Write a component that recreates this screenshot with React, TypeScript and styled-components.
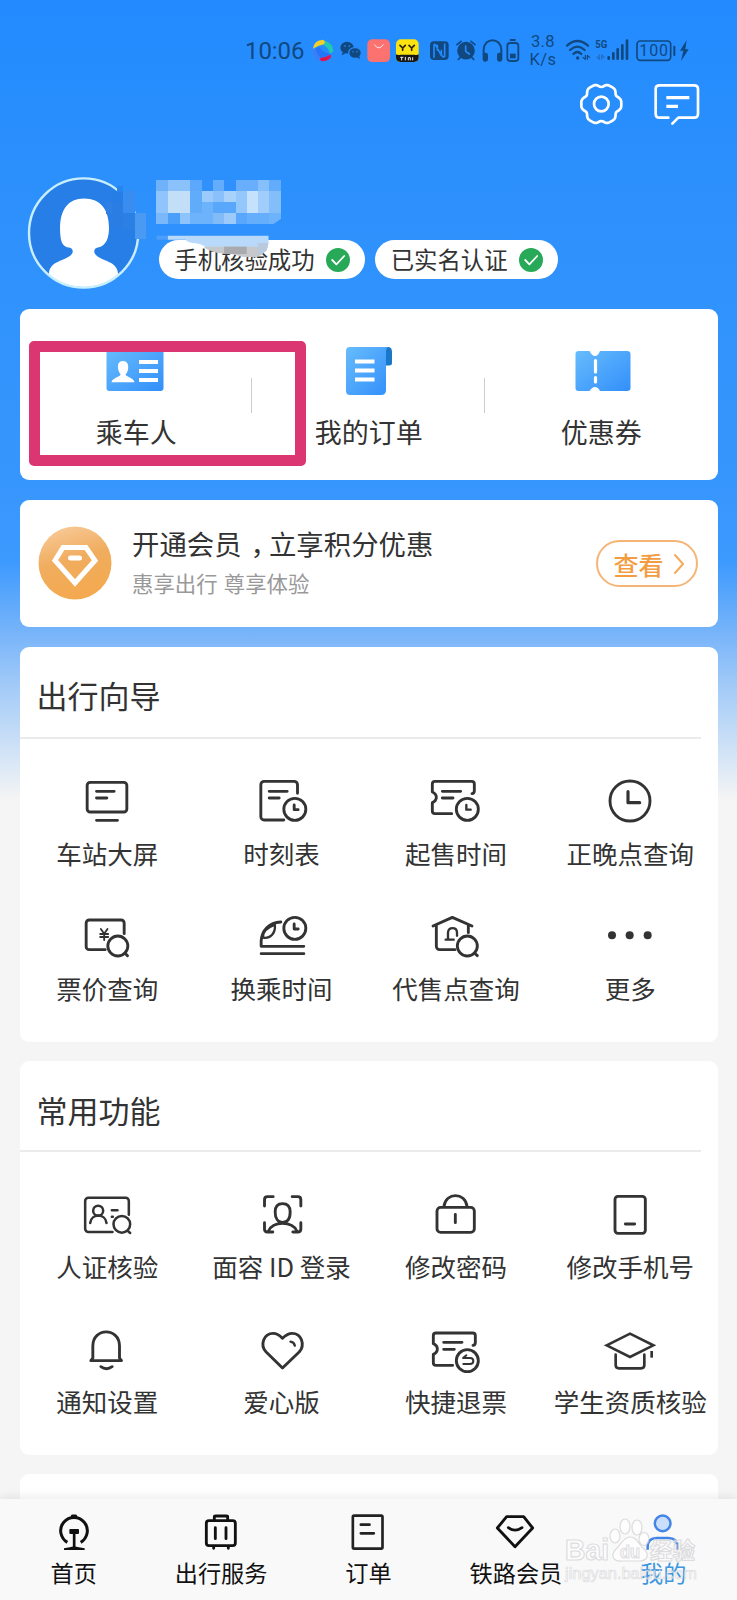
import React from "react";
import styled, { createGlobalStyle } from "styled-components";

const GlobalStyle = createGlobalStyle`
  * { box-sizing: border-box; }
  body {
    margin: 0;
    background: #f5f5f5;
    font-family: "Noto Sans CJK SC", "Noto Sans", sans-serif;
    color: #333;
  }
`;

const Screen = styled.div`
  position: relative;
  display: flex;
  flex-direction: column;
  width: 737px;
  height: 1600px;
  overflow: hidden;
  background: linear-gradient(
    180deg,
    #228bff 0px,
    #2c90fc 180px,
    #3796fd 480px,
    #3c99fe 560px,
    #7db7f9 640px,
    #a5ccf8 690px,
    #d3e4f6 755px,
    #f5f5f5 800px
  );
`;

const Content = styled.main`
  flex: 1;
  min-height: 0;
  overflow: hidden;
`;

/* ---------- shared drawing surface ---------- */

const Drawing = styled.svg`
  display: block;
  flex: none;
  fill: none;
  stroke-linecap: round;
  stroke-linejoin: round;
`;

type GlyphProps = {
  box: [number, number, number, number];
  color?: string;
  weight?: number;
  children: React.ReactNode;
};

/* Icons are drawn on a grid three times finer than the page. */
function Glyph({ box, color = "#333", weight = 8.6, children }: GlyphProps) {
  return (
    <Drawing
      viewBox={box.join(" ")}
      width={box[2] / 3}
      height={box[3] / 3}
      stroke={color}
      strokeWidth={weight}
    >
      {children}
    </Drawing>
  );
}

/* ---------- status bar ---------- */

const INK = "#11487f";

const StatusBar = styled.div`
  display: flex;
  align-items: center;
  height: 70px;
  padding: 32px 0 0 245px;
  color: ${INK};
`;

const Clock = styled.span`
  width: 63px;
  font: 400 24px/38px Roboto, sans-serif;
  letter-spacing: -0.1px;
`;

const NetSpeed = styled.span`
  width: 34px;
  text-align: center;
  font: 400 16.5px/18px Roboto, sans-serif;
  letter-spacing: 0.4px;
`;

function StatusIcons() {
  return (
    <>
      <Glyph box={[234, 36, 87, 114]} color="none">
        <path d="M249 86 Q252 60 279 59 Q289 64 283 73 Q266 75 249 86Z" fill="#f3cf2c" />
        <path d="M286 62 Q308 70 310 92 Q307 100 299 100 Q296 84 282 76Z" fill="#22c9b0" />
        <path d="M249 88 Q247 112 266 122 Q274 122 273 112 Q260 102 258 84Z" fill="#3d7df5" />
        <path d="M258 84 Q258 104 272 113 Q290 114 299 101 Q280 98 268 82Z" fill="#2375fa" />
        <path d="M271 114 Q286 114 300 104 Q306 106 301 114 Q291 124 276 124 Q268 121 271 114Z" fill="#e4134e" />
      </Glyph>
      <Glyph box={[321, 36, 81, 114]} color="none">
        <g fill={INK}>
          <ellipse cx="351" cy="83" rx="20" ry="17.5" />
          <path d="M338 96 l-3 10 12-6z" />
        </g>
        <ellipse cx="374" cy="98" rx="20" ry="17" fill="#238bfd" />
        <g fill={INK}>
          <ellipse cx="375" cy="99" rx="17" ry="14.5" />
          <path d="M380 110 l9 8 -1-10z" />
        </g>
        <g fill="#238bfd">
          <circle cx="345" cy="78" r="2.6" />
          <circle cx="358" cy="78" r="2.6" />
          <circle cx="369" cy="95" r="2.2" />
          <circle cx="381" cy="95" r="2.2" />
        </g>
      </Glyph>
      <Glyph box={[402, 36, 86, 114]} color="#fff" weight={2.5}>
        <rect x="412" y="58" width="68" height="68" rx="14" fill="#fb7270" stroke="none" />
        <path d="M433 74 Q447 94 460 74" />
      </Glyph>
      <Glyph box={[488, 36, 94, 114]} color="#2a2300" weight={5}>
        <rect x="497" y="58" width="68" height="68" rx="14" fill="#fbe210" stroke="none" />
        <path d="M509 76 L517 84 L525 76 M517 84 V91 M536 76 L544 84 L552 76 M544 84 V91" />
        <path d="M497 103 Q503 107 510 104 H552 Q559 107 565 103 V112 Q565 126 551 126 H511 Q497 126 497 112Z" fill="#171717" stroke="none" />
        <path d="M511 112 h7 M514 112v8 M525 112v8 M534 120v-7h6v7 M547 113v7" stroke="#eee" strokeWidth={3} />
      </Glyph>
      <Glyph box={[582, 36, 85, 114]} color="none">
        <rect x="600" y="64" width="56" height="56" rx="12" fill={INK} />
        <path d="M612 112 V76 Q612 72 616 74 L634 106 V92 M622 76 V90 M644 72 V108 Q644 112 639 110 L634 106" stroke="#238bfd" strokeWidth={5} />
      </Glyph>
      <Glyph box={[667, 36, 80, 114]} color={INK} weight={5}>
        <circle cx="709" cy="92" r="24" fill={INK} />
        <path d="M682 74 L694 64 M736 74 L724 64 M692 112 L686 118 M726 112 L732 118" />
        <path d="M708 78 V94 L719 102" stroke="#238bfd" />
      </Glyph>
      <Glyph box={[747, 36, 75, 114]} color={INK} weight={6}>
        <path d="M761 104 V88 C763 52 812 52 814 88 V104" />
        <rect x="761" y="101" width="10" height="21" rx="4" fill={INK} />
        <rect x="804" y="101" width="10" height="21" rx="4" fill={INK} />
      </Glyph>
      <Glyph box={[822, 36, 66, 114]} color={INK} weight={5.5}>
        <rect x="832" y="69" width="33" height="54" rx="8" />
        <path d="M842 60 H855" />
        <rect x="840" y="101" width="17" height="14" fill={INK} stroke="none" />
      </Glyph>
      <NetSpeed>3.8 K/s</NetSpeed>
      <Glyph box={[990, 36, 96, 114]} color={INK} weight={6.5}>
        <path d="M1011 77 Q1042 49 1074 77 M1020 90 Q1042 70 1064 90 M1030 102 Q1042 90 1054 102" />
        <circle cx="1043" cy="114" r="5" fill={INK} stroke="none" />
        <path d="M1066 106 V118 L1059 112 M1072 118 V106 L1079 112" strokeWidth={3.5} />
      </Glyph>
      <Glyph box={[1086, 36, 120, 114]} color={INK} weight={8}>
        <text x="1096" y="84" fontSize="33" fontWeight="700" fontFamily="Roboto, sans-serif" textLength="36" lengthAdjust="spacingAndGlyphs" fill={INK} stroke="none">5G</text>
        <path d="M1108 105 V118 L1101 111 M1115 118 V105 L1122 112" stroke="#1f6fc6" strokeWidth={4} />
        <path d="M1136 112 V116 M1150 100 V116 M1163 88 V116 M1177 76 V116 M1191 62 V116" />
      </Glyph>
      <Glyph box={[1206, 36, 138, 114]} color={INK} weight={5}>
        <rect x="1221" y="63" width="101" height="58" rx="10" />
        <path d="M1333 80 V105" strokeWidth={6} />
        <text x="1228" y="109" fontSize="48" fontFamily="Roboto, sans-serif" textLength="86" fill={INK} stroke="none">100</text>
      </Glyph>
      <Glyph box={[1344, 36, 42, 114]} color="none">
        <path d="M1370 60 L1350 92 H1360 L1353 124 L1376 88 H1366 Z" fill={INK} />
      </Glyph>
    </>
  );
}

/* ---------- header ---------- */

const HeaderActions = styled.div`
  display: flex;
  justify-content: flex-end;
  gap: 26.7px;
  height: 57px;
  padding: 11px 35.3px 0 0;
`;

const gearOutline = Array.from({ length: 96 }, (_, i) => {
  const angle = (i / 96) * Math.PI * 2;
  const wave = Math.cos(6 * angle);
  const radius = 57 + 4.5 * wave - 1.6 * Math.cos(12 * angle);
  return `${(1115 + radius * Math.cos(angle)).toFixed(1)},${(252 + radius * Math.sin(angle)).toFixed(1)}`;
}).join(" ");

function GearIcon() {
  return (
    <Glyph box={[1045, 183, 140, 138]} color="#fff" weight={8}>
      <polygon points={gearOutline} />
      <circle cx="1115" cy="252" r="22" />
    </Glyph>
  );
}

function MessageIcon() {
  return (
    <Glyph box={[1265, 183, 150, 138]} color="#fff" weight={8}>
      <path d="M1314 293 H1287 Q1276 293 1276 281 V207 Q1276 196 1287 196 H1391 Q1403 196 1403 207 V281 Q1403 293 1391 293 H1344 L1326 311" />
      <path d="M1308 233 H1377 M1308 259 H1343" strokeWidth={10} strokeLinecap="butt" />
    </Glyph>
  );
}

const Profile = styled.section`
  position: relative;
  display: flex;
  gap: 18px;
  height: 181.5px;
  padding: 49px 0 0 27px;
`;

const Identity = styled.div`
  padding-top: 64px;
`;

const TagRow = styled.div`
  display: flex;
  gap: 10px;
`;

const Tag = styled.div`
  display: flex;
  align-items: center;
  gap: 11.2px;
  height: 39px;
  padding: 0 15.5px 0 15.3px;
  border-radius: 20px;
  background: #fff;
  font-size: 23.4px;
  line-height: 37px;
  white-space: nowrap;
`;

function CheckBadge() {
  return (
    <Drawing width="24" height="24" viewBox="0 0 24 24">
      <circle cx="12" cy="12" r="12" fill="#27a957" />
      <path d="M6.2 12 L10.4 16.3 L18.2 8" stroke="#fff" strokeWidth="1.8" />
    </Drawing>
  );
}

function Avatar() {
  return (
    <Drawing width="114" height="114" viewBox="0 0 114 114">
      <defs>
        <clipPath id="face">
          <circle cx="56.6" cy="57" r="54" />
        </clipPath>
      </defs>
      <circle cx="56.6" cy="57" r="54.6" fill="#267ee6" />
      <path
        clipPath="url(#face)"
        fill="#fff"
        d="M57 22.500 C41 22.500 33 34 33 52 C33 67 36 71 42 71.500 C46 72 47 76 44 79 C38 85 22 85 22 98 V114 H91 V98 C91 85 74 85 69 79 C66 76 67 72 71 71.500 C79 70 82 62 82 52 C82 34 74 22.500 57 22.500Z"
      />
      <circle cx="56.6" cy="57" r="54.6" stroke="#c9efff" strokeWidth="2.4" />
    </Drawing>
  );
}

const NameMask = styled.svg`
  position: absolute;
  left: 105.4px;
  top: 51.3px;
  width: 177.6px;
  height: 81.7px;
`;

const maskBlocks: [number, number, number, number, string][] = [
  [303, 124, 32, 32, "#267de6"],
  [318, 108, 15, 20, "#2a84ee"],
  [334, 124, 31, 65, "#3a8df0"],
  [303, 156, 31, 80, "#297de3"],
  [334, 189, 31, 52, "#2b80e4"],
  [365, 191, 30, 78, "#4a99f2"],
  [288, 156, 15, 36, "#2f80e4"],
  [424, 90, 336, 134, "#6db3fb"],
  [424, 90, 32, 34, "#70b2fa"],
  [456, 90, 60, 34, "#8bc2fb"],
  [516, 90, 30, 34, "#5ba8fc"],
  [546, 90, 31, 34, "#3091fd"],
  [577, 90, 30, 34, "#64adfc"],
  [607, 90, 31, 34, "#3091fd"],
  [638, 90, 60, 34, "#68aefc"],
  [698, 90, 31, 34, "#85bffc"],
  [729, 90, 31, 34, "#62acfb"],
  [424, 124, 32, 66, "#8fc4fc"],
  [456, 124, 60, 66, "#c3dff8"],
  [516, 124, 30, 66, "#60acfb"],
  [546, 124, 31, 32, "#9bcafc"],
  [577, 124, 30, 32, "#8ac1fb"],
  [607, 124, 31, 32, "#a9d2fb"],
  [577, 156, 61, 34, "#59a7fa"],
  [638, 124, 30, 66, "#94c8fc"],
  [668, 124, 30, 66, "#c4e2fc"],
  [698, 124, 31, 66, "#a0cdfb"],
  [729, 124, 31, 66, "#84befa"],
  [424, 190, 32, 34, "#7ab8f9"],
  [456, 190, 31, 34, "#4a9ffb"],
  [487, 190, 29, 34, "#8dc4fc"],
  [577, 190, 30, 34, "#81bcf9"],
  [607, 190, 31, 34, "#9ccafa"],
  [638, 190, 30, 34, "#58a7fc"],
  [668, 190, 61, 34, "#65aefc"],
];

function MaskedName() {
  return (
    <NameMask viewBox="285 85 480 245" preserveAspectRatio="none">
      {maskBlocks.map(([x, y, w, h, fill], i) => (
        <rect key={i} x={x} y={y} width={w} height={h} fill={fill} shapeRendering="crispEdges" />
      ))}
      <path d="M738 225 L761 207 V225Z" fill="#2e90fc" />
      <rect x="424" y="258" width="31" height="12" fill="#4b9efb" />
      <path d="M455 258 H727 V280 Q724 291 700 292 H557 Q545 282 525 280 Q505 277 503 270 H455Z" fill="#b9d9fa" />
      <path d="M551 291 H725 Q716 316 694 322 H660 L630 314 L590 310 Q566 304 551 291Z" fill="#c6c8cb" />
      <rect x="607" y="291" width="61" height="22" fill="#a9aaac" />
      <path d="M698 280 H727 L722 303 L698 318Z" fill="#b9c9de" />
    </NameMask>
  );
}

/* ---------- cards ---------- */

const Stack = styled.div`
  display: flex;
  flex-direction: column;
  gap: 19.5px;
  width: 697.5px;
  margin-left: 20px;
`;

const Card = styled.section<{ $height: number }>`
  position: relative;
  flex: none;
  height: ${(p) => p.$height}px;
  border-radius: 9px;
  background: #fff;
`;

const ShortcutCard = styled(Card)`
  display: grid;
  grid-template-columns: repeat(3, 1fr);
`;

const Shortcut = styled.a<{ $divided?: boolean }>`
  display: flex;
  flex-direction: column;
  align-items: center;
  gap: 18px;
  padding-top: 37.5px;
  font-size: 27px;
  line-height: 36px;
  white-space: nowrap;
  background: ${(p) =>
    p.$divided ? "linear-gradient(#ccc, #ccc) right 69px / 1.3px 35px no-repeat" : "none"};
`;

const ShortcutIcon = styled.span<{ $nudge: number }>`
  margin-left: ${(p) => p.$nudge}px;
`;

const Highlight = styled.div`
  position: absolute;
  left: 9px;
  top: 32.5px;
  width: 276.5px;
  height: 125px;
  border: 11.5px solid #db3671;
  border-radius: 5px;
`;

const BlueDefs = () => (
  <defs>
    <linearGradient id="blue" x1="0" y1="0" x2="1" y2="1">
      <stop offset="0" stopColor="#66bcfc" />
      <stop offset="1" stopColor="#338ffb" />
    </linearGradient>
  </defs>
);

function PassengerIcon() {
  return (
    <Drawing width="58" height="50" viewBox="0 0 58 50">
      <BlueDefs />
      <rect x="0.5" y="4" width="57" height="41" rx="3" fill="url(#blue)" />
      <path fill="#fff" d="M17 15 C13 15 11.5 18 12 22 C12.3 25 13.5 27 14.6 28.2 C14.6 31 6 31.5 5.5 36.2 H28.5 C28 31.5 19.6 31 19.6 28.2 C21 27 22 25 22.2 22 C22.5 18 21 15 17 15Z" />
      <path d="M33 16 H52 M33 25 H52 M33 34 H52" stroke="#fff" strokeWidth="3.8" strokeLinecap="butt" />
    </Drawing>
  );
}

function OrdersIcon() {
  return (
    <Drawing width="48" height="50" viewBox="0 0 48 50">
      <path d="M37 1 H43 Q47 1 47 6 V17 Q47 19.500 44 19.500 H37Z" fill="#1a78c8" />
      <path d="M5 1 H43 Q41 2 41 6 V44 Q41 49 36 49 H5 Q1 49 1 45 V5 Q1 1 5 1Z" fill="url(#blue)" />
      <path d="M10 15.500 H29.500 M10 24.500 H29.500 M10 33.500 H29.500" stroke="#fff" strokeWidth="3.8" strokeLinecap="butt" />
    </Drawing>
  );
}

function CouponIcon() {
  return (
    <Drawing width="56" height="50" viewBox="0 0 56 50">
      <path d="M3.500 5 H14.500 Q17 10 20 10 Q23 10 25 5 H52 Q55.500 5 55.500 8 V42 Q55.500 45 52 45 H25 Q23 41 20 41 Q17 41 14.500 45 H3.500 Q0.500 45 0.500 42 V8 Q0.500 5 3.500 5Z" fill="url(#blue)" />
      <path d="M20.500 14.500 V26 M20.500 31.500 V36" stroke="#fff" strokeWidth="3.2" />
    </Drawing>
  );
}

const MemberCard = styled(Card)`
  display: flex;
  align-items: center;
  padding: 0 20px 0 18px;
`;

const MemberText = styled.div`
  flex: 1;
  padding-left: 20px;
`;

const MemberTitle = styled.div`
  font-size: 27.4px;
  line-height: 40px;
  white-space: nowrap;
`;

/* Half-width comma centred in a full-width cell. */
const Comma = styled.span`
  margin: 0 4.7px 0 9px;
  font-feature-settings: "halt";
`;

const MemberHint = styled.div`
  color: #999;
  font-size: 21.4px;
  line-height: 40px;
  word-spacing: 1.4px;
`;

const ViewButton = styled.button`
  display: flex;
  align-items: center;
  gap: 9px;
  width: 102px;
  height: 47px;
  margin-top: 1px;
  padding: 0 0 0 16px;
  border: 2px solid #f5b577;
  border-radius: 24px;
  background: #fff;
  color: #f39c42;
  font: 500 25px/44px "Noto Sans CJK SC", sans-serif;
  white-space: nowrap;
`;

function MemberBadge() {
  return (
    <Drawing width="74" height="74" viewBox="0 0 74 74">
      <defs>
        <linearGradient id="gold" x1="0.300" y1="0" x2="0.600" y2="1">
          <stop offset="0" stopColor="#f8c896" />
          <stop offset="0.450" stopColor="#f0ad5e" />
          <stop offset="1" stopColor="#f4a94e" />
        </linearGradient>
      </defs>
      <circle cx="37" cy="37" r="36.500" fill="url(#gold)" />
      <path d="M25 21.500 H48 L57 34.500 L37 57 L17 34.500 Z" stroke="#fff" strokeWidth="5" strokeLinejoin="miter" />
      <path d="M32.500 32 H41.500" stroke="#fff" strokeWidth="5" />
    </Drawing>
  );
}

/* ---------- service grids ---------- */

const SectionHead = styled.h2<{ $height: number }>`
  position: relative;
  height: ${(p) => p.$height}px;
  margin: 0 16.5px 0 0;
  padding: 25.5px 0 0 16.5px;
  border-bottom: 2px solid #e9ebed;
  font-size: 31px;
  font-weight: 400;
  line-height: 46px;
`;

const ServiceGrid = styled.div`
  display: grid;
  grid-template-columns: repeat(4, 174.375px);
  row-gap: 42px;
  padding-top: 38.5px;
`;

const Service = styled.a`
  display: flex;
  flex-direction: column;
  align-items: center;
  gap: 9.5px;
  font-size: 25.5px;
  line-height: 36px;
  white-space: nowrap;
`;

const ticketOutline =
  "M315 131 Q322 130 322 123 V102 a8 8 0 0 0 -8 -8 H204 a8 8 0 0 0 -8 8 V126 q12 5 12 16 t-12 16 V183 a8 8 0 0 0 8 8 H254";

const travelGuide: { label: string; icon: React.ReactNode }[] = [
  {
    label: "车站大屏",
    icon: (
      <Glyph box={[231.5, 81, 180, 144]}>
        <rect x="262" y="97" width="119" height="89" rx="9" />
        <path d="M290 124 H343 M290 144 H321 M290 211 H353" />
      </Glyph>
    ),
  },
  {
    label: "时刻表",
    icon: (
      <Glyph box={[754.5, 81, 180, 144]}>
        <path d="M891 130 V104 a10 10 0 0 0 -10 -10 H791 a10 10 0 0 0 -10 10 V200 a10 10 0 0 0 10 10 H850" />
        <path d="M806 124 H860 M806 144 H836 M881 165 V179 H893" />
        <circle cx="883" cy="178" r="33" />
      </Glyph>
    ),
  },
  {
    label: "起售时间",
    icon: (
      <Glyph box={[177, 81, 180, 144]}>
        <path d={ticketOutline} />
        <path d="M226 124 H281 M226 144 H258" />
        <circle cx="301" cy="178" r="33" />
        <path d="M298 165 V179 H311" strokeWidth={7} />
      </Glyph>
    ),
  },
  {
    label: "正晚点查询",
    icon: (
      <Glyph box={[700, 81, 180, 144]}>
        <circle cx="790" cy="153" r="60" />
        <path d="M784 125 V158 H819" strokeWidth={9.5} />
      </Glyph>
    ),
  },
  {
    label: "票价查询",
    icon: (
      <Glyph box={[231.5, 488, 180, 144]}>
        <path d="M373 550 V518 a9 9 0 0 0 -9 -9 H268 a9 9 0 0 0 -9 9 V589 a9 9 0 0 0 9 9 H316" />
        <circle cx="354" cy="587" r="30" />
        <path d="M375 608 L383 616" />
        <path d="M303 536 L313 550 L323 536 M313 550 V569 M301 551 H325 M301 560 H325" strokeWidth={5.5} />
      </Glyph>
    ),
  },
  {
    label: "换乘时间",
    icon: (
      <Glyph box={[754.5, 488, 180, 144]}>
        <path d="M910 588 H782 V572 C784 540 805 517 841 515 M782 610 H910" />
        <path d="M788 562 C808 566 826 550 823 523 M788 562 C784 546 800 532 823 523" strokeWidth={7} />
        <circle cx="883" cy="534" r="33" />
        <path d="M881 521 V536 H893" />
      </Glyph>
    ),
  },
  {
    label: "代售点查询",
    icon: (
      <Glyph box={[177, 488, 180, 144]}>
        <path d="M198 527 L256 501 L315 527 M208 525 V588 a10 10 0 0 0 10 10 H264 M304 525 V547" />
        <path d="M236 568 H260 M243 566 V546 C245 529 269 529 270 546 V556" strokeWidth={7} />
        <circle cx="301" cy="587" r="30" />
        <path d="M322 608 L331 616" />
      </Glyph>
    ),
  },
  {
    label: "更多",
    icon: (
      <Glyph box={[700, 488, 180, 144]} color="none">
        <g fill="#333">
          <circle cx="736" cy="555" r="12" />
          <circle cx="789" cy="555" r="12" />
          <circle cx="843" cy="555" r="12" />
        </g>
      </Glyph>
    ),
  },
];

const commonTools: { label: string; icon: React.ReactNode }[] = [
  {
    label: "人证核验",
    icon: (
      <Glyph box={[231.5, 418, 180, 144]} weight={7.6}>
        <path d="M387 492 V451 a10 10 0 0 0 -10 -10 H266 a10 10 0 0 0 -10 10 V534 a10 10 0 0 0 10 10 H338" />
        <circle cx="295" cy="480" r="15" />
        <path d="M271 517 C275 487 316 487 320 517 M336 479 H353 M336 498 H339" />
        <circle cx="366" cy="521" r="25" />
        <path d="M384 541 L391 547" />
      </Glyph>
    ),
  },
  {
    label: "面容 ID 登录",
    icon: (
      <Glyph box={[754.5, 418, 180, 144]}>
        <path d="M792 466 V447 Q792 438 801 438 H818 M875 438 H892 Q901 438 901 447 V466 M792 516 V535 Q792 544 801 544 H817 M901 516 V535 Q901 544 892 544 H877" />
        <path d="M846 459 C830 459 824 470 824 484 C824 503 832 515 846 515 C861 515 869 503 869 484 C869 470 863 459 846 459Z M804 541 C812 523 829 518 846 518 C864 518 881 523 889 541" />
      </Glyph>
    ),
  },
  {
    label: "修改密码",
    icon: (
      <Glyph box={[177, 418, 180, 144]}>
        <rect x="210" y="470" width="112" height="75" rx="11" />
        <path d="M231 467 C236 424 295 424 300 467 M265 491 V516" />
      </Glyph>
    ),
  },
  {
    label: "修改手机号",
    icon: (
      <Glyph box={[700, 418, 180, 144]}>
        <rect x="745" y="437" width="91" height="111" rx="9" />
        <path d="M776 520 H804" />
      </Glyph>
    ),
  },
  {
    label: "通知设置",
    icon: (
      <Glyph box={[231.5, 825, 180, 144]}>
        <path d="M279 921 V884 C280 829 358 829 359 884 V921 L365 929 H273 Z M303 947 Q320 959 337 947" />
      </Glyph>
    ),
  },
  {
    label: "爱心版",
    icon: (
      <Glyph box={[754.5, 825, 180, 144]}>
        <path d="M846 951 L797 903 C777 881 790 847 818 847 C832 847 840 856 846 862 C852 856 861 847 875 847 C903 847 915 881 896 903 Z" />
        <path d="M870 872 Q881 873 883 884" strokeWidth={7} />
      </Glyph>
    ),
  },
  {
    label: "快捷退票",
    icon: (
      <Glyph box={[177, 825, 180, 144]}>
        <path d={ticketOutline} transform="translate(3 752)" />
        <path d="M230 874 H285 M230 895 H262" />
        <circle cx="301" cy="929" r="33" />
        <path d="M298 913 L288 921 H309 Q319 921 319 930 Q319 939 309 939 H289" strokeWidth={6} />
      </Glyph>
    ),
  },
  {
    label: "学生资质核验",
    icon: (
      <Glyph box={[700, 825, 180, 144]} weight={8}>
        <path d="M720 883 L790 848 L860 883 L790 918 Z" strokeLinejoin="miter" />
        <path d="M747 911 V942 Q747 952 757 952 H823 Q833 952 833 942 V911" />
        <path d="M855 900 V920" strokeLinecap="butt" />
      </Glyph>
    ),
  },
];

/* ---------- tab bar ---------- */

const TabBar = styled.nav`
  position: relative;
  display: grid;
  grid-template-columns: repeat(5, 1fr);
  flex: none;
  height: 101.3px;
  padding-top: 13.6px;
  background: #f9f9f9;
  box-shadow: 0 -2px 9px rgba(0, 0, 0, 0.08);
`;

const Tab = styled.a<{ $active?: boolean }>`
  display: flex;
  flex-direction: column;
  align-items: center;
  gap: 4.4px;
  color: ${(p) => (p.$active ? "#3f97df" : "#111")};
  font-size: 23.2px;
  line-height: 30px;
  white-space: nowrap;
`;

const tabs: { label: string; active?: boolean; icon: React.ReactNode }[] = [
  {
    label: "首页",
    icon: (
      <Glyph box={[149, 157, 144, 120]} color="#111" weight={9}>
        <path d="M201 248 A40 40 0 1 1 241 248" strokeLinecap="butt" />
        <path d="M216 169 H226" strokeWidth={9} />
        <rect x="207" y="208" width="29" height="15" rx="3" fill="#111" stroke="none" />
        <path d="M221.500 218 V262" strokeWidth={8} />
        <path d="M191 271 V266 Q210 263 221 260 Q234 263 253 266 V271Z" fill="#111" stroke="none" />
      </Glyph>
    ),
  },
  {
    label: "出行服务",
    icon: (
      <Glyph box={[591, 157, 144, 120]} color="#111" weight={8.5}>
        <rect x="619" y="183" width="87" height="75" rx="8" />
        <path d="M643 181 V172 Q643 169 647 169 H679 Q683 169 683 172 V181 M646 204 V237 M678 204 V237 M641 260 V266 M685 260 V266" />
      </Glyph>
    ),
  },
  {
    label: "订单",
    icon: (
      <Glyph box={[1033.5, 157, 144, 120]} color="#222" weight={8}>
        <rect x="1060" y="168" width="89" height="99" rx="4" />
        <path d="M1084 195 H1110 M1084 221 H1123" />
      </Glyph>
    ),
  },
  {
    label: "铁路会员",
    icon: (
      <Glyph box={[375, 157, 144, 120]} color="#111" weight={8.5}>
        <path d="M419 171 H470 L497 205 L444 261 L391 205 Z M424 204 Q444 219 465 204" />
      </Glyph>
    ),
  },
  {
    label: "我的",
    active: true,
    icon: (
      <Glyph box={[817, 157, 144, 120]} color="#4385e6" weight={7.5}>
        <circle cx="888" cy="191" r="23.5" fill="#c8defb" />
        <path d="M843 270 V262 Q843 235 870 235 H905 Q932 235 932 262 V270" strokeLinecap="butt" />
      </Glyph>
    ),
  },
];

const Watermark = styled.svg`
  position: absolute;
  left: 560px;
  top: 16.5px;
  width: 142px;
  height: 72px;
  fill: rgba(255, 255, 255, 0.6);
  stroke: rgba(200, 200, 204, 0.6);
  stroke-width: 1.2;
  font-family: "Liberation Sans", "Noto Sans CJK SC", sans-serif;
  font-weight: 700;
`;

function BaiduMark() {
  return (
    <Watermark viewBox="560 1516 142 72">
      <text x="565" y="1561" fontSize="29" textLength="44" lengthAdjust="spacingAndGlyphs">Bai</text>
      <ellipse cx="615" cy="1537" rx="5" ry="7" />
      <ellipse cx="625" cy="1527.500" rx="5" ry="7.500" />
      <ellipse cx="637" cy="1528.500" rx="5" ry="7.500" />
      <ellipse cx="644" cy="1540" rx="5" ry="6.500" />
      <path d="M630 1538 C623 1538 621 1546 616 1550 C609 1558 615 1563 622 1562 H639 C648 1562 650 1555 643 1549 C638 1545 637 1538 630 1538Z" />
      <text x="620" y="1559" fontSize="18" textLength="20" lengthAdjust="spacingAndGlyphs">du</text>
      <text x="650" y="1560" fontSize="22.500">经验</text>
      <text x="565" y="1580" fontSize="16" fontWeight="400" textLength="132" lengthAdjust="spacingAndGlyphs" strokeWidth="0.700">jingyan.baidu.com</text>
    </Watermark>
  );
}

/* ---------- page ---------- */

type SectionProps = {
  title: string;
  headHeight: number;
  height: number;
  items: { label: string; icon: React.ReactNode }[];
};

function ServiceSection({ title, headHeight, height, items }: SectionProps) {
  return (
    <Card $height={height}>
      <SectionHead $height={headHeight}>{title}</SectionHead>
      <ServiceGrid>
        {items.map((item) => (
          <Service key={item.label}>
            {item.icon}
            {item.label}
          </Service>
        ))}
      </ServiceGrid>
    </Card>
  );
}

export default function App() {
  return (
    <Screen>
      <GlobalStyle />
      <Content>
        <StatusBar>
          <Clock>10:06</Clock>
          <StatusIcons />
        </StatusBar>
        <HeaderActions>
          <GearIcon />
          <MessageIcon />
        </HeaderActions>
        <Profile>
          <Avatar />
          <Identity>
            <TagRow>
              <Tag>
                手机核验成功
                <CheckBadge />
              </Tag>
              <Tag>
                已实名认证
                <CheckBadge />
              </Tag>
            </TagRow>
          </Identity>
          <MaskedName />
        </Profile>
        <Stack>
          <ShortcutCard $height={171.5}>
            <Shortcut $divided>
              <ShortcutIcon $nudge={-2}>
                <PassengerIcon />
              </ShortcutIcon>
              乘车人
            </Shortcut>
            <Shortcut $divided>
              <ShortcutIcon $nudge={0}>
                <OrdersIcon />
              </ShortcutIcon>
              我的订单
            </Shortcut>
            <Shortcut>
              <ShortcutIcon $nudge={2.5}>
                <CouponIcon />
              </ShortcutIcon>
              优惠券
            </Shortcut>
            <Highlight />
          </ShortcutCard>
          <MemberCard $height={127.5}>
            <MemberBadge />
            <MemberText>
              <MemberTitle>
                开通会员<Comma>，</Comma>立享积分优惠
              </MemberTitle>
              <MemberHint>惠享出行 尊享体验</MemberHint>
            </MemberText>
            <ViewButton>
              查看
              <Drawing width="12" height="22" viewBox="0 0 12 22">
                <path d="M2 2 L10 11 L2 20" stroke="#f5a95c" strokeWidth="2" />
              </Drawing>
            </ViewButton>
          </MemberCard>
          <ServiceSection title="出行向导" headHeight={92} height={395} items={travelGuide} />
          <ServiceSection title="常用功能" headHeight={90.5} height={393.5} items={commonTools} />
          <Card $height={60} />
        </Stack>
      </Content>
      <TabBar>
        {tabs.map((tab) => (
          <Tab key={tab.label} $active={tab.active}>
            {tab.icon}
            {tab.label}
          </Tab>
        ))}
        <BaiduMark />
      </TabBar>
    </Screen>
  );
}
